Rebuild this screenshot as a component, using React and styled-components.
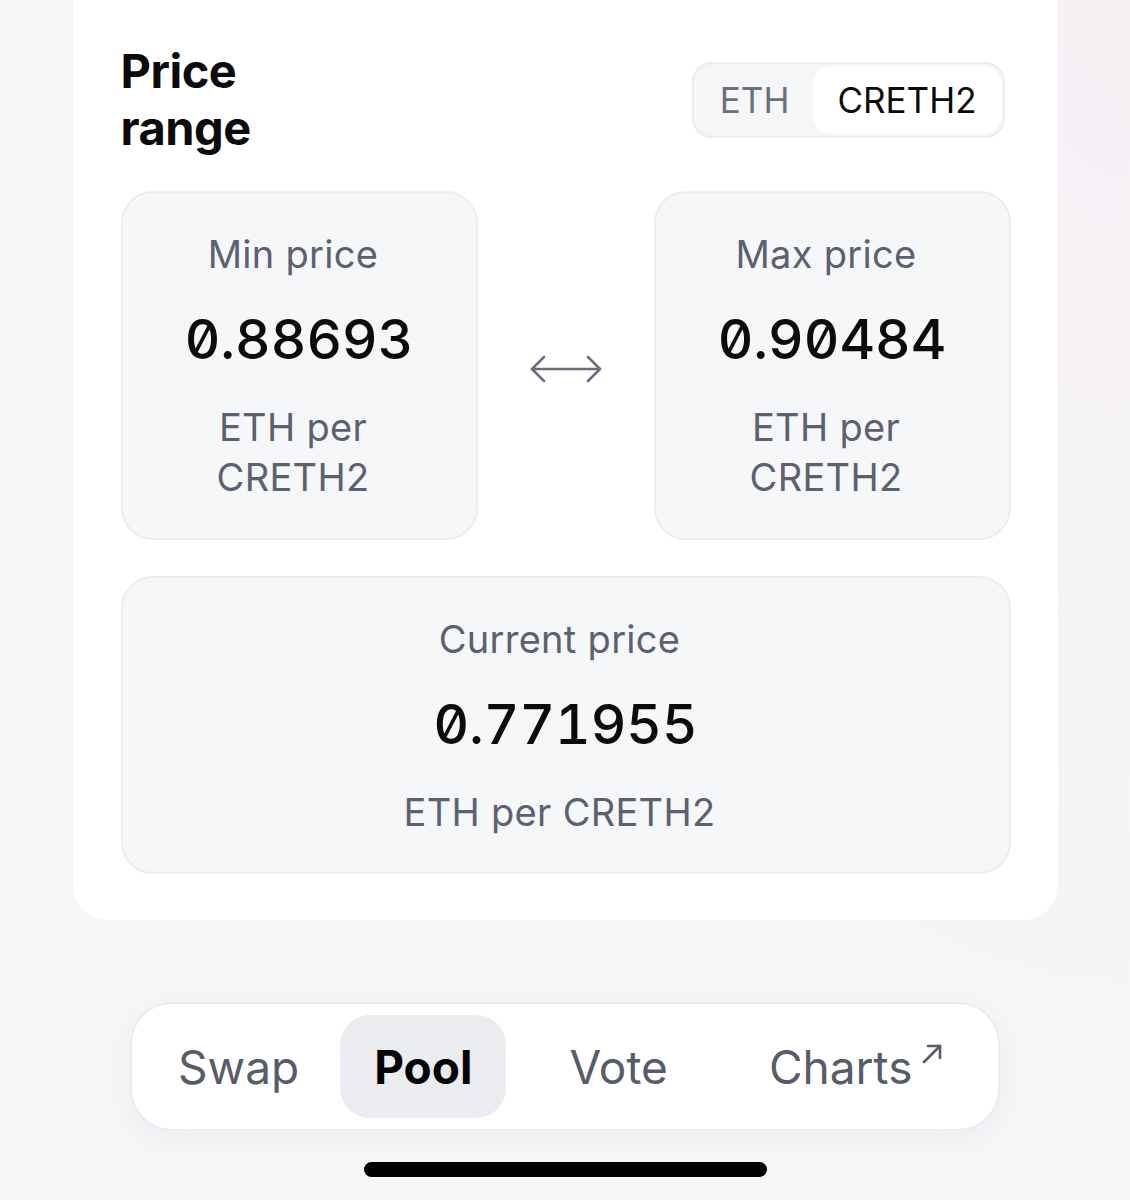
import React from 'react';
import styled, { createGlobalStyle } from 'styled-components';

const GlobalStyle = createGlobalStyle`
  html, body {
    margin: 0;
    padding: 0;
  }
  body {
    font-family: Inter, "Noto Sans", "Liberation Sans", sans-serif;
    background: #f5f6f8;
    -webkit-font-smoothing: antialiased;
  }
`;

const Page = styled.div`
  min-height: 1200px;
  display: flex;
  flex-direction: column;
  align-items: center;
  background: radial-gradient(ellipse 700px 1100px at 100% 0%, #f6f0f5 0%, #f5f6f8 100%);
`;

const Card = styled.section`
  width: 985px;
  box-sizing: border-box;
  padding: 42px 47px 46px 48px;
  background: #ffffff;
  border-radius: 0 0 34px 34px;
`;

const Header = styled.div`
  display: flex;
  justify-content: space-between;
  align-items: flex-start;
`;

const Title = styled.h2`
  margin: 0;
  width: 200px;
  font-size: 47px;
  font-weight: 700;
  line-height: 57px;
  letter-spacing: -0.5px;
  color: #0b0b0c;
`;

const Toggle = styled.div`
  margin-top: 20px;
  margin-right: 6px;
  display: flex;
  padding: 2px;
  background: #f5f6f8;
  border: 2px solid #eaecef;
  border-radius: 20px;
`;

const ToggleOption = styled.button`
  border: none;
  height: 68px;
  padding: 0 24px;
  border-radius: 17px;
  font-family: inherit;
  font-size: 35px;
  font-weight: 400;
  color: ${(p) => (p.active ? '#0b0b0c' : '#6b6f7b')};
  background: ${(p) => (p.active ? '#ffffff' : 'transparent')};
  cursor: pointer;
`;

const RangeRow = styled.div`
  margin-top: 35px;
  display: flex;
  align-items: center;
`;

const PriceBox = styled.div`
  width: ${(p) => (p.wide ? '100%' : '357px')};
  height: ${(p) => (p.wide ? '298px' : '349px')};
  box-sizing: border-box;
  padding: 0 28px;
  display: flex;
  flex-direction: column;
  align-items: center;
  justify-content: center;
  text-align: center;
  background: #f6f7f9;
  border: 2px solid #ebedf0;
  border-radius: 32px;
  margin-top: ${(p) => (p.wide ? '36px' : '0')};
`;

const Label = styled.div`
  padding-right: 12px;
  font-size: 38px;
  line-height: 50px;
  letter-spacing: 0.3px;
  color: #5c6170;
  margin-bottom: 28px;
`;

const Value = styled.div`
  font-size: 55px;
  font-weight: 500;
  line-height: 64px;
  font-feature-settings: "tnum" 1, "zero" 1;
  font-variant-numeric: tabular-nums slashed-zero;
  color: #0b0b0c;
`;

const Unit = styled.div`
  margin-top: 31px;
  padding: 0 12px 0 0;
  font-size: 38px;
  line-height: 50px;
  letter-spacing: 0.3px;
  color: #5c6170;
`;

const ArrowSlot = styled.div`
  flex: 1;
  display: flex;
  justify-content: center;
  padding-top: 7px;
`;

const Nav = styled.nav`
  margin-top: 82px;
  width: 870px;
  height: 129px;
  box-sizing: border-box;
  padding: 0 12px;
  display: flex;
  align-items: center;
  background: #ffffff;
  border: 2px solid #ececf0;
  border-radius: 42px;
  box-shadow: 0 8px 28px rgba(30, 30, 60, 0.04);
`;

const NavItem = styled.a`
  height: 103px;
  margin-left: ${(p) => p.offset || 0}px;
  padding: 0 34px;
  display: flex;
  align-items: center;
  border-radius: 30px;
  font-size: 46px;
  font-weight: ${(p) => (p.active ? 700 : 400)};
  color: ${(p) => (p.active ? '#050506' : '#585c68')};
  background: ${(p) => (p.active ? '#ebecf0' : 'transparent')};
  text-decoration: none;
`;

const External = styled.span`
  display: inline-flex;
  align-self: flex-start;
  margin-top: 28px;
  margin-left: 8px;
`;

const HomeBar = styled.div`
  margin-top: 31px;
  width: 403px;
  height: 15px;
  border-radius: 8px;
  background: #000000;
`;

const SwapArrows = () => (
  <svg width="74" height="30" viewBox="0 0 74 30" fill="none" stroke="#6b6f7b" strokeWidth="2.6" strokeLinecap="round" strokeLinejoin="round">
    <path d="M3 15 H71" />
    <path d="M15 3 L3 15 L15 27" />
    <path d="M59 3 L71 15 L59 27" />
  </svg>
);

const ArrowUpRight = () => (
  <svg width="24" height="22" viewBox="0 0 24 22" fill="none" stroke="#585c68" strokeWidth="2.6" strokeLinecap="round" strokeLinejoin="round">
    <path d="M4 19 L20 3" />
    <path d="M8 3 H20 V15" />
  </svg>
);

const PriceCard = ({ label, value, unit, wide }) => (
  <PriceBox wide={wide}>
    <Label>{label}</Label>
    <Value>{value}</Value>
    <Unit>{unit}</Unit>
  </PriceBox>
);

export default function App() {
  return (
    <Page>
      <GlobalStyle />
      <Card>
        <Header>
          <Title>Price range</Title>
          <Toggle>
            <ToggleOption>ETH</ToggleOption>
            <ToggleOption active>CRETH2</ToggleOption>
          </Toggle>
        </Header>
        <RangeRow>
          <PriceCard label="Min price" value="0.88693" unit="ETH per CRETH2" />
          <ArrowSlot>
            <SwapArrows />
          </ArrowSlot>
          <PriceCard label="Max price" value="0.90484" unit="ETH per CRETH2" />
        </RangeRow>
        <PriceCard wide label="Current price" value="0.771955" unit="ETH per CRETH2" />
      </Card>
      <Nav>
        <NavItem>Swap</NavItem>
        <NavItem active offset={7}>Pool</NavItem>
        <NavItem offset={29}>Vote</NavItem>
        <NavItem offset={33}>
          Charts
          <External>
            <ArrowUpRight />
          </External>
        </NavItem>
      </Nav>
      <HomeBar />
    </Page>
  );
}
